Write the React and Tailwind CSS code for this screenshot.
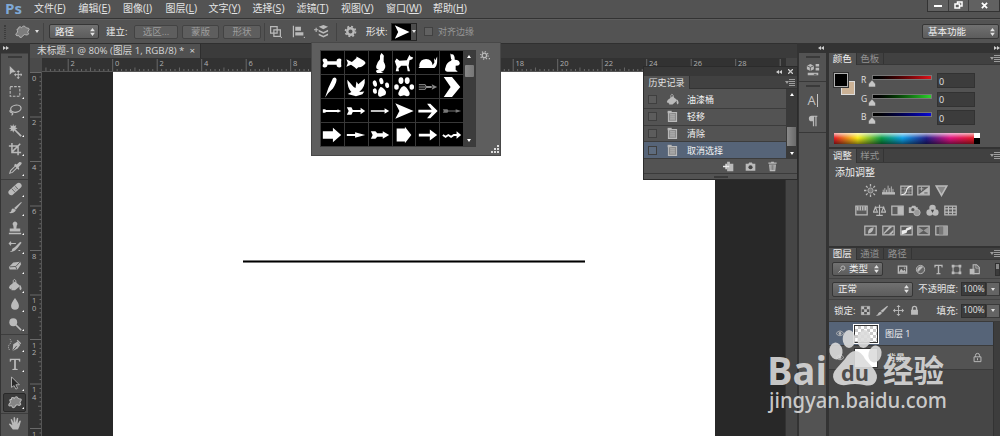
import clsx from 'clsx'

const menus = [
  { name: '文件', hotkey: 'F', width: 'w-[44.5px]' },
  { name: '编辑', hotkey: 'E', width: 'w-[44.5px]' },
  { name: '图像', hotkey: 'I', width: 'w-[42.5px]' },
  { name: '图层', hotkey: 'L', width: 'w-[43px]' },
  { name: '文字', hotkey: 'Y', width: 'w-[44px]' },
  { name: '选择', hotkey: 'S', width: 'w-[44px]' },
  { name: '滤镜', hotkey: 'T', width: 'w-[44.5px]' },
  { name: '视图', hotkey: 'V', width: 'w-[45px]' },
  { name: '窗口', hotkey: 'W', width: 'w-[47px]' },
  { name: '帮助', hotkey: 'H', width: 'w-[44px]' }
]

// All small icons share a 16x16 grid
function Icon({ children, className = 'w-4 h-4' }) {
  return (
    <svg viewBox="0 0 16 16" className={clsx('shrink-0 text-[#bababa]', className)} fill="currentColor">
      {children}
    </svg>
  )
}

const STAR = 'M4 3.500q1.500-1.500 3 .5Q9 1 10.500 2.500 12 5 14.500 4.500q1.500 1-.5 3-1 1 .5 3-1 2-3 1-1.500-1-3 1-2 3-3.500 1.500-.5-2.500-3-1.500-2-.5-.5-2.500 2-1.500 1-3-1.500-2 1.500-2z'
const FOLDER = 'M3 3h10v11H3z'
const LOCK = 'M4 7V5a4 4 0 0 1 8 0v2h1v7H3V7zM6 7h4V5a2 2 0 0 0-4 0z'

const bucket = (
  <>
    <path d="M3 8 8 4l6 5-6 5H4z" />
    <path d="M14 8q3 5 0 6-2-2 0-6M1 11q1-4 4-3l-2 5z" />
    <path d="M6 8V3q1-3 3 0v4" fill="none" stroke="currentColor" />
  </>
)

const tools = [
  { id: 'move', icon: <><path d="M2 1v10l2.500-2.500L9 8z" /><path d="M7.500 11H16M11.700 7v8.500" stroke="currentColor" strokeWidth="1.100" /><path d="m7 11 2-2v4zM16.500 11l-2-2v4zM11.700 6l2 2h-4zM11.700 16l2-2h-4z" /></>, single: true },
  { id: 'marquee', icon: <rect x="2.500" y="3" width="11" height="11" fill="none" stroke="currentColor" strokeWidth="1.200" strokeDasharray="3 1.500" /> },
  { id: 'lasso', icon: <g fill="none" stroke="currentColor" strokeWidth="1.400"><ellipse cx="9" cy="6.500" rx="6" ry="4" transform="rotate(-12 9 6.500)" /><path d="M3 8q-2 2 1 3t0 3" /></g> },
  { id: 'wand', icon: <><path d="m8 8 7 7" stroke="currentColor" strokeWidth="2" /><path d="m6 1 .8 2.500L9.500 2.500 8.500 5l2.500 1-2.500 1 1 2.500L7 8.500 6 11 5 8.500l-2.500 1 1-2.500L1 6l2.500-1-1-2.500 2.700 1z" /></> },
  { id: 'crop', icon: <path d="M4.500 1v11H15M1 4.500h10.500V15M5 11l9-9" fill="none" stroke="currentColor" strokeWidth="1.700" /> },
  { id: 'eyedropper', icon: <><path d="m2 14 1-3 6-6 2 2-6 6z" fill="none" stroke="currentColor" strokeWidth="1.200" /><path d="m8 3 2 1 3-3q4 0 2 3l-3 3 1 2-1 1-5-5z" /></>, divider: true },
  { id: 'heal', icon: <g transform="rotate(-42 8 8)"><rect x="-1" y="4.800" width="18" height="6.400" rx="3.200" /><path d="M5.500 5v6M10.500 5v6" stroke="#555" strokeWidth=".8" /><path d="M7 7h.8M8.500 7h.8M7 9h.8M8.500 9h.8" stroke="#555" strokeWidth=".8" /></g> },
  { id: 'brush', icon: <><path d="m7 8 8-7 .8.800L9 10z" /><path d="M7 9q3 1 1 3-3 3-7.500 1.500Q4 13 4 10q1-2 3-1" /></> },
  { id: 'stamp', icon: <path d="M6.500 8.500 6 5a2.600 2.600 0 1 1 4 0l-.5 3.500H14V12H2V8.500zM1 13.500h14V15H1z" /> },
  { id: 'history', icon: <><path d="m8 8 6-6 1.500 1L11 9l-3 3q-3 2-6 1.500Q5 13 5 10z" /><path d="M2 4h7M3.500 2 1.500 4l2 2M12 12h2" stroke="currentColor" strokeWidth="1.300" fill="none" /></> },
  { id: 'eraser', icon: <><path d="m6 4 8-1 1 3-4 6H2l-1-3z" /><path d="m2 9 7-.5L14 3M9 9l1 3" stroke="#555" fill="none" /></> },
  { id: 'bucket', icon: bucket },
  { id: 'blur', icon: <path d="M8 1q4.500 6 4.500 9a4.500 4.500 0 0 1-9 0Q3.500 7 8 1" /> },
  { id: 'dodge', icon: <><circle cx="6" cy="6" r="4.500" /><path d="m9 9 6 6" stroke="currentColor" strokeWidth="1.700" /></>, divider: true },
  { id: 'pen', icon: <><path d="m5 15 1-8 5-3 3 4-3 4z" /><path d="m11 2 4 4-1 1-4-4z" /><path d="m5 15 5-6" stroke="#444" /><path d="M2 1q3 3 0 6t0 7" stroke="currentColor" fill="none" strokeDasharray="1.500 1" /></> },
  { id: 'type', icon: <path d="M2 2h12v3.500h-1L12 3.500H9v9.800l2 .5v1H5v-1l2-.5V3.500H4l-1 2H2z" /> },
  { id: 'select', icon: <path d="M4 1v12l3-2 2 4 2-1-2-4h4z" fill="#292929" stroke="currentColor" /> },
  { id: 'shape', icon: <path d={STAR} fill="#858585" stroke="currentColor" strokeWidth="1.200" />, active: true, divider: true },
  { id: 'hand', icon: <path d="M5.500 15.500 1 9.500q.5-1.500 2-.5L5 10.500 3 4q.8-1.200 1.700 0L6.500 8 6.300 2q1-1.500 1.800 0l.6 5.500L10 2.500q1-1.200 1.700.2L11 9l2.200-3.500q1.300-.7 1.500.5L13 12l-1.500 3.500z" />, single: true }
]

// Custom shape presets, drawn on a 24x24 grid
const shapes = [
  <path d="M2 10q-1-3 2-3t3 3h10q0-3 3-3t2 3v4q1 3-2 3t-3-3H7q0 3-3 3t-2-3l1-2z" />,
  <path d="m1.500 8 6 3 5-4.500 0-1.500 4 2q4.500 2 6 5-3 5-8 4.500l-2 2-2-2-4-2.500-5 2 1.500-4z" />,
  <path d="M12 4l1.500-3 1.500 1.500q2 1 1 4v4q3 5 1 8-1 3-4 3l3 1.500H9q-2-1-1-3l3-1q-4 0-3-4 1-4 4-7z" />,
  <path d="m2 10 2-3 3 2.500 8-.5 3-6 1 2 3 1-1 2-3 1-1 6 1.500 6H16l-1-6H9l-3 3 .5 3H3l1-5z" />,
  <path d="M1.500 17.500q2-1 1-3 1-7 7.500-7 6.500.5 7 7l2-3-.5-5 1.500 2.500L22 5v5q0 5-3 7.500z" />,
  <path d="M12 2.500q3 0 3 6 5.500 0 5.500 4.500-1 2-4.500 2v4.500q2.500 1 2 2H7q-4-1-2-5 1-5 6-7 .5-1 1-3l-1.500-4M10 1l3 6-2 1z" />,
  <path d="M13 2.500q3-2 4 1 0 4-4 10l-5 5-3.500 5L8 13z" />,
  <path d="m2.500 4 7 8 2 1 1-7 2 3 7-6q1 9-6 14.500l5.500-.5-2 3-7 2-9-2.500 4-2q-4.500-5-4.500-13.500" />,
  <g transform="rotate(-14 12 12)"><ellipse cx="5.500" cy="15" rx="2.200" ry="3" /><ellipse cx="7.500" cy="7" rx="2.200" ry="3.500" /><ellipse cx="15" cy="6" rx="2.200" ry="3.500" /><ellipse cx="20" cy="12" rx="2.200" ry="3" /><path d="M12.500 12q3 1 4.500 6 0 5-5 4-5 1.500-4-3 1-5 4.500-7" /></g>,
  <><ellipse cx="3.800" cy="12" rx="2.500" ry="3" /><ellipse cx="8.700" cy="5" rx="2.700" ry="3.700" /><ellipse cx="15.500" cy="5" rx="2.700" ry="3.700" /><ellipse cx="20.500" cy="12" rx="2.500" ry="3" /><path d="M12 11q3 1 6 7 1 4-3 4l-3-1-4 1q-3-1-2-4 3-7 6-7" /></>,
  <><path d="M2 9.500h7l1 2h6M2 14.500h7l1-2h6M2 12h8" fill="none" stroke="#bbb" strokeWidth=".9" /><path d="m16 9 6 3-6 3 1-3z" fill="#888" /></>,
  <path d="M3 1h9l9 11-9 11H3l7.500-11z" />,
  <path d="M2 10h3v1h13v-1l4 2-4 2v-1H5v1H2z" />,
  <path d="M2 8h5l1.500 3H17V8.500l5 3.500-5 3.500V13H8.500L7 16H2l2-4z" />,
  <path d="M2 11.300h15V9l5 3-5 3v-2.300H2z" />,
  <path d="m2.500 3.500 20 8.500-20 8.500 4.500-8.500z" />,
  <path d="M1.500 10.500H16l-5-6.500h3.500l8 8-8 8H11l5-6.500H1.500z" />,
  <path d="M2 10h5l1 1.500h8V10l6 2-6 2v-1.500H8L7 14H2l1-2z" fill="#777" />,
  <path d="M2 8h11V4l9 8-9 8v-4H2z" />,
  <path d="M2 11h9V9l11 3-11 3v-2H2z" />,
  <path d="M2 8h5l2 2h6V8l7 4-7 4v-2H9l-2 2H2l2-4z" />,
  <path d="M4 5h9V3l7 9-7 9v-2H4z" />,
  <path d="M2 10.500h12V6l8 6-8 6v-4.500H2z" />,
  <><path d="m2 12 3 2 3-2 3 2 3-2h4" fill="none" stroke="#fff" strokeWidth="2" /><path d="m17 8 5 4-5 4z" /></>
]

const historyRows = [
  { label: '油漆桶', bucket: true },
  { label: '轻移' },
  { label: '清除' },
  { label: '取消选择', active: true }
]

const channels = [
  { name: 'R', bar: 'from-black to-[#e0121a]' },
  { name: 'G', bar: 'from-black to-[#2bd42b]' },
  { name: 'B', bar: 'from-black to-[#0909d8]' }
]

const frame = <path d="M1 2.500h14v11H1z" fill="#5b5b5b" stroke="currentColor" strokeWidth="1.500" />

const adjustments = [
  [
    <><circle cx="8" cy="8" r="3.200" fill="#777" stroke="currentColor" /><path d="M8 0v3M8 13v3M0 8h3M13 8h3M2.500 2.500l2 2M11.500 11.500l2 2M2.500 13.500l2-2M11.500 4.500l2-2" stroke="currentColor" strokeWidth="1.600" /></>,
    <><path d="M0 10h16v3H0z" /><path d="M1.500 7v4M3.500 5v6M5.500 7v4M7.500 2v9M9.500 5v6M11.500 3v8M13.500 6v5" stroke="currentColor" strokeWidth="1.100" /></>,
    <>{frame}<path d="M1 6h14M1 10h14M6 3v10M11 3v10" stroke="currentColor" strokeWidth=".6" /><path d="M2 13q5 0 6-5t6-5" fill="none" stroke="#eee" strokeWidth="1.500" /></>,
    <>{frame}<path d="M15 3v10H2z" /><path d="M3 6h5M5.500 3.500v5" stroke="currentColor" /><path d="M9 11h4" stroke="#444" /></>,
    <path d="M1.500 2.500h13L8 14z" fill="#888" stroke="currentColor" strokeWidth="2" />
  ],
  [
    <>{frame}<path d="M2 3h12v5H2z" /><path d="M5 3v5M8 3v5M11 3v5" stroke="#555" /></>,
    <path d="M8 1v13M4 14h8M2 4h12M3 4l-2.500 6h5zM13 4l-2.500 6h5z" fill="none" stroke="currentColor" strokeWidth="1.400" />,
    <>{frame}<path d="M8 3h7v10H8z" /></>,
    <><path d="M1 4h3l1-2h4l1 2h2v7H1z" /><circle cx="11" cy="10.500" r="4" fill="#999" stroke="currentColor" /><circle cx="6" cy="7" r="2" fill="#555" /></>,
    <><circle cx="8" cy="5" r="4" /><circle cx="4.500" cy="10.500" r="4" /><circle cx="11.500" cy="10.500" r="4" /><path d="M6 7h4l-2 4z" fill="#444" /></>,
    <>{frame}<path d="M1 6h14M1 10h14M5.500 3v10M10.500 3v10" stroke="currentColor" strokeWidth="1.300" /></>
  ],
  [
    <>{frame}<path d="M5 12q-1-7 7-8-1 7-7 8" /></>,
    <>{frame}<path d="M2 11 9 3h4L2 13zM8 13l6-6v3l-3 3z" /></>,
    <>{frame}<path d="M2 8l5-1 1-2 6-2v3L9 8l-1 3-6 2z" fill="#eee" /></>,
    <>{frame}<path d="M1 3l7 5 7-5v10L8 8l-7 5z" fill="#999" /></>,
    <>{frame}<path d="M5 3h5v10H5z" fill="#777" /><path d="M10 3h5v10h-5z" fill="#a0a0a0" /></>
  ]
]

function Caret() {
  return <span className="shrink-0 border-x-[2.5px] border-t-[3px] border-x-transparent border-t-[#e0e0e0]"></span>
}

function UpDown() {
  return (
    <svg viewBox="0 0 6 10" className="ml-auto w-[5px] h-[8px] shrink-0" fill="#e2e2e2">
      <path d="m3 0 3 4H0zM3 10l3-4H0z" />
    </svg>
  )
}

function Select({ children, className }) {
  return (
    <div className={clsx('flex items-center shrink-0 rounded-[2px] border border-[#363636] bg-linear-to-b from-[#717171] to-[#5c5c5c] pl-[5px] pr-[3px] text-[#f0f0f0]', className)}>
      {children}
      <UpDown />
    </div>
  )
}

function DisabledButton({ children, className }) {
  return (
    <div className={clsx('flex items-center justify-center shrink-0 h-[14px] rounded-[2px] border border-[#434343] bg-[#5e5e5e] text-[#9c9c9c]', className)}>
      {children}
    </div>
  )
}

function PanelMenu() {
  return (
    <svg viewBox="0 0 10 7" className="ml-auto w-[10px] h-[7px] shrink-0 self-center" fill="#9d9d9d">
      <path d="M0 2h4L2 5zM4 0h6v1H4zM4 2h6v1H4zM4 4h6v1H4zM4 6h6v1H4z" />
    </svg>
  )
}

function Tabs({ items, className }) {
  return (
    <div className={clsx('flex shrink-0 bg-[#414141] border-b border-[#383838]', className)}>
      {items.map((item, i) => (
        <div
          key={item}
          className={clsx(
            'flex items-center justify-center w-[27.500px] border-r border-[#343434]',
            i === 0 ? 'bg-[#535353] text-[#f0f0f0] -mb-px' : 'text-[#929292]'
          )}
        >
          {item}
        </div>
      ))}
      <PanelMenu />
    </div>
  )
}

function Chevrons({ right }) {
  return (
    <svg viewBox="0 0 6 4" className={clsx('w-[6px] h-[4px] shrink-0', right && 'rotate-180')} fill="#cfcfcf">
      <path d="M3 0v4L0 2zM6 0v4L3 2z" />
    </svg>
  )
}

function Grip() {
  return <div className="mx-auto h-[2px] w-[14px] shrink-0 bg-[#3a3a3a]"></div>
}

function MenuBar() {
  return (
    <div className="flex h-[19px] shrink-0 border-b border-[#333] bg-[#535353] text-[#e4e4e4]">
      <div className="w-[34px] pl-[5px] text-[15px] leading-[16px] font-bold text-[#7fa9d6]">Ps</div>
      {menus.map((menu) => (
        <div key={menu.name} className={clsx('shrink-0 text-[10px] leading-[16px] whitespace-nowrap', menu.width)}>
          {menu.name}
          <span className="text-[10.500px]">(<u>{menu.hotkey}</u>)</span>
        </div>
      ))}
      <div className="ml-auto flex h-[12px] w-[73px] border border-t-0 border-[#333] bg-[#616161]">
        <div className="flex w-[21px] items-center justify-center border-r border-[#3c3c3c]">
          <span className="h-[2px] w-[8px] bg-white"></span>
        </div>
        <div className="flex w-[20px] items-center justify-center border-r border-[#3c3c3c]">
          <svg viewBox="0 0 9 8" className="w-[9px] h-[8px] -mt-px" fill="none" stroke="#fff" strokeWidth="1.500">
            <path d="M3.500 2.500V1H8v4H6M1 3h4.500v4H1z" />
          </svg>
        </div>
        <div className="flex flex-1 items-center justify-center pb-px">
          <svg viewBox="0 0 8 8" className="w-[7px] h-[7px]" stroke="#fff" strokeWidth="2">
            <path d="m1 1 6 6M7 1 1 7" />
          </svg>
        </div>
      </div>
    </div>
  )
}

function OptionsBar() {
  return (
    <div className="flex h-[24px] shrink-0 items-center bg-[#535353] border-t border-t-[#5e5e5e] text-[9.500px] text-[#e8e8e8]">
      <div className="ml-[4px] h-[14px] w-[2px] border-x border-dotted border-[#3c3c3c]"></div>
      <Icon className="ml-[9px] w-[15px] h-[15px]"><path d={STAR} fill="#7d7d7d" stroke="currentColor" /></Icon>
      <div className="ml-[5px] mr-[4px] flex"><Caret /></div>
      <div className="h-[18px] w-px bg-[#434343]"></div>
      <Select className="ml-[5px] h-[15px] w-[50px]">路径</Select>
      <div className="w-[35px] shrink-0 pl-[7px] whitespace-nowrap">建立:</div>
      <DisabledButton className="w-[44px]">选区...</DisabledButton>
      <DisabledButton className="ml-[4px] w-[37px]">蒙版</DisabledButton>
      <DisabledButton className="ml-[4px] w-[38px]">形状</DisabledButton>
      <div className="ml-[3px] h-[18px] w-px bg-[#434343]"></div>
      <Icon className="ml-[4px] w-[13px] h-[13px]">
        <path d="M2 2h8v8H2zM6 6h8v8H6z" fill="none" stroke="currentColor" strokeWidth="1.500" />
        <path d="M14 16h2v-2z" />
      </Icon>
      <Icon className="ml-[10px] w-[13px] h-[13px]">
        <path d="M1 1h1.500v14H1zM4 2h7v5H4zM4 9h10v4H4zM14 16h2v-2z" />
      </Icon>
      <Icon className="ml-[9px] w-[15px] h-[15px]">
        <path d="m10 1 5 2-5 2.500L5 3zM5 6l5 2.500L15 6v2l-5 2.500L5 8zM5 10l5 2.500 5-2.500v2l-5 2.500L5 12zM0 5.500h4.500v1.200H0z" />
        <path d="M1.700 4h1.200v4.500H1.700z" />
      </Icon>
      <div className="ml-[7px] h-[18px] w-px bg-[#434343]"></div>
      <Icon className="ml-[7px] w-[13px] h-[13px]">
        <circle cx="8" cy="8" r="4" fill="none" stroke="currentColor" strokeWidth="3" />
        <circle cx="8" cy="8" r="6.200" fill="none" stroke="currentColor" strokeWidth="2" strokeDasharray="2.400 2.470" />
      </Icon>
      <div className="ml-[9px] w-[25px] shrink-0 whitespace-nowrap">形状:</div>
      <div className="flex h-[18px] w-[26px] shrink-0 border border-[#262626] bg-black">
        <svg viewBox="0 0 24 24" className="w-[19px] h-[16px]" fill="#fff"><path d="m2 2 22 10L2 22l5-10z" /></svg>
        <div className="flex flex-1 items-center justify-center bg-[#4d4d4d]"><Caret /></div>
      </div>
      <div className="ml-[7px] h-[9px] w-[9px] shrink-0 border border-[#414141] bg-[#616161]"></div>
      <div className="ml-[5px] whitespace-nowrap text-[9px] text-[#969696]">对齐边缘</div>
      <Select className="ml-auto mr-px h-[15px] w-[77px]">基本功能</Select>
    </div>
  )
}

function Toolbar() {
  return (
    <div className="flex w-[30px] shrink-0 flex-col bg-[#343434] pr-[2px] pl-px">
      <div className="flex h-[10px] shrink-0 items-center pl-[2px]"><Chevrons right /></div>
      <div className="flex flex-1 flex-col overflow-hidden border-t border-[#444] bg-[#535353] pt-[2px]">
        <Grip />
        <div className="flex flex-col pt-[4.500px]">
          {tools.map((tool) => (
            <div key={tool.id} className={clsx('shrink-0', tool.divider && 'border-b border-[#3d3d3d] pb-px')}>
              <div
                className={clsx(
                  'flex h-[19.200px] items-center justify-center',
                  tool.active && 'mx-[2px] rounded-[2px] border border-[#292929] bg-[#3b3b3b]'
                )}
              >
                <Icon className="w-[14px] h-[14px]">{tool.icon}</Icon>
                {!tool.single && (
                  <span className="-mr-[2px] mb-[2px] self-end border-l-[1px] border-t-[1px] border-l-transparent border-t-transparent border-r border-b border-r-white border-b-white"></span>
                )}
              </div>
            </div>
          ))}
        </div>
      </div>
    </div>
  )
}

const UNIT = 22.25

function TopRuler() {
  const ticks = Array.from({ length: 167 }, (_, i) => i - 15)
  return (
    <svg width="744" height="14" viewBox="42 58 744 14" className="shrink-0 bg-[#323232]">
      {ticks.map((t) => {
        const x = 112.7 + (t * UNIT) / 5
        return <path key={t} d={`M${x} 71v${t % 10 === 0 ? -12 : t % 5 === 0 ? -3.5 : -2}`} stroke="#777" strokeWidth=".8" />
      })}
      {ticks.filter((t) => t % 10 === 0 && t < 150).map((t) => (
        <text key={t} x={115 + (t * UNIT) / 5} y="66" fontSize="7.5" fill="#b0b0b0">{Math.abs(t / 5)}</text>
      ))}
      <path d="M42 71.500h744" stroke="#555" />
    </svg>
  )
}

function SideRuler() {
  const ticks = Array.from({ length: 84 }, (_, i) => i)
  return (
    <svg width="12" height="364" viewBox="30 72 12 364" className="shrink-0 bg-[#323232]">
      {ticks.map((t) => {
        const y = 72.5 + (t * UNIT) / 5
        return <path key={t} d={`M42 ${y}h${t % 10 === 0 ? -12 : t % 5 === 0 ? -4 : -2.5}`} stroke="#777" strokeWidth=".8" />
      })}
      {ticks.filter((t) => t % 10 === 0).map((t) =>
        String(t / 5).split('').map((digit, i) => {
          const y = 80.5 + (t * UNIT) / 5 + i * 7.5
          return y < 438 && (
            <text key={t + '-' + i} x="32" y={y} fontSize="7.5" fill="#b0b0b0">{digit}</text>
          )
        })
      )}
      <path d="M41.500 72v364" stroke="#555" />
    </svg>
  )
}

function Document() {
  return (
    <div className="flex w-[767px] shrink-0 flex-col bg-[#3b3b3b]">
      <div className="flex h-[15px] shrink-0 border-t border-[#303030]">
        <div className="flex w-[171px] items-center justify-between border-r border-[#2e2e2e] bg-[#505050] pr-[5px] pl-[7px] text-[9.700px] whitespace-nowrap text-[#d6d6d6]">
          <span>未标题-1 @ 80% (图层 1, RGB/8) *</span>
          <span>×</span>
        </div>
      </div>
      <div className="flex h-[14px] shrink-0">
        <div className="w-[12px] bg-[#4a4a4a]"></div>
        <TopRuler />
        <div className="flex-1 bg-[#454545]"></div>
      </div>
      <div className="flex flex-1">
        <SideRuler />
        <div className="flex flex-1 bg-[#282828] pl-[71px]">
          <div className="w-[602px] bg-white pt-[188px] pl-[130px]">
            <div className="h-[3px] w-[342px] border-y border-[#777] bg-black"></div>
          </div>
        </div>
        <div className="w-[12px] border-l border-[#333] bg-[#454545]"></div>
      </div>
    </div>
  )
}

function IconDock() {
  return (
    <div className="flex w-[31px] shrink-0 flex-col bg-[#333] pr-[2px] pl-[2px]">
      <div className="flex h-[10px] shrink-0 items-center justify-end pr-[2px]"><Chevrons /></div>
      <div className="flex flex-1 flex-col bg-[#535353]">
        <div className="flex h-[29px] flex-col border-b border-[#383838] pt-[3px]">
          <Grip />
          <Icon className="mx-auto mt-[5px] w-[14px] h-[14px]">
            <path d="m5 1 4 2v4L5 9 1 7V3zM11 1h4v3h-4zM11 5.500h4v3h-4zM2 11h12v3H2z" />
            <path d="m1 3 4 2 4-2M5 5v4M9 13h3" stroke="#555" fill="none" />
          </Icon>
        </div>
        <div className="flex h-[51px] flex-col items-center border-b border-[#383838] pt-[3px]">
          <Grip />
          <div className="mt-[6px] flex h-[14px] items-center text-[13px] text-[#c4c4c4]">
            A<span className="ml-px h-[13px] w-px bg-[#c4c4c4]"></span>
          </div>
          <Icon className="mt-[7px] w-[13px] h-[13px]">
            <path d="M7 2h7v1.500h-1V15h-1.500V3.500H10V15H8.500V9H7a3.500 3.500 0 0 1 0-7" />
          </Icon>
        </div>
      </div>
    </div>
  )
}

function ColorPanel() {
  return (
    <>
      <Tabs items={['颜色', '色板']} className="h-[12px]" />
      <div className="h-[84px] shrink-0 border-b-2 border-[#333] bg-[#535353] pt-[8px] pl-[5px]">
        <div className="flex h-[60px]">
          <div className="relative w-[27px]">
            <div className="absolute top-[8px] left-[7px] h-[14px] w-[14px] border border-[#ddd] bg-[#cbb296]"></div>
            <div className="relative h-[14px] w-[14px] border border-[#b0b0b0] bg-black outline outline-[#333]"></div>
          </div>
          <div className="flex flex-col">
            {channels.map((channel) => (
              <div key={channel.name} className="flex h-[18.500px]">
                <div className="w-[11px] pt-px text-[8.500px] leading-[12px] text-[#e0e0e0]">{channel.name}</div>
                <div className="w-[65px] pt-[2px]">
                  <div className={clsx('h-[5px] w-[60px] border border-[#777] bg-linear-to-r', channel.bar)}></div>
                  <svg viewBox="0 0 8 7" className="-ml-[4px] w-[8px] h-[7px]" fill="#c6c6c6" stroke="#555" strokeWidth=".6"><path d="m4 0 3.500 4v3h-7V4z" /></svg>
                </div>
                <div className="flex h-[15px] w-[38px] items-center border border-[#323232] bg-[#3c3c3c] pt-px pl-px text-[9px] text-[#e4e4e4]">0</div>
              </div>
            ))}
          </div>
        </div>
        <div className="flex h-[11px] w-[146px]">
          <div className="flex-1 bg-[linear-gradient(to_right,#e51b24,#f9ea16_17%,#0a9b48_34%,#0e9fe6_49%,#23208c_66%,#df1380_83%,#e51b24)]">
            <div className="h-full bg-linear-to-b from-white/70 via-transparent via-45% to-black/50"></div>
          </div>
          <div className="w-[6px] bg-linear-to-b from-white from-50% to-black to-50%"></div>
        </div>
      </div>
    </>
  )
}

function AdjustPanel() {
  return (
    <>
      <Tabs items={['调整', '样式']} className="h-[14px]" />
      <div className="flex h-[85px] shrink-0 flex-col border-b-2 border-[#333] bg-[#535353] pt-[2px]">
        <div className="h-[15px] pl-[6px] text-[10px] leading-[14px] text-[#ececec]">添加调整</div>
        {adjustments.map((row, i) => (
          <div key={i} className="flex h-[20px] w-[154px] items-center justify-center gap-[4.700px] self-start">
            {row.map((icon, j) => (
              <Icon key={j} className="w-[13px] h-[13px]">{icon}</Icon>
            ))}
          </div>
        ))}
      </div>
    </>
  )
}

function Percent() {
  return (
    <div className="flex h-[14px] w-[39px] shrink-0">
      <div className="flex w-[25px] items-center border border-[#303030] bg-[#3c3c3c] pl-px text-[8.500px] text-[#e4e4e4]">100%</div>
      <div className="flex flex-1 items-center justify-center border border-[#393939] bg-[#646464]"><Caret /></div>
    </div>
  )
}

function Eye() {
  return (
    <Icon className="w-[10px] h-[9px]">
      <path d="M1 8q7-9 14 0-7 8-14 0z" fill="none" stroke="currentColor" strokeWidth="1.500" />
      <circle cx="8" cy="8" r="2.500" />
    </Icon>
  )
}

function LayersPanel() {
  return (
    <>
      <Tabs items={['图层', '通道', '路径']} className="h-[12px]" />
      <div className="flex h-[19px] shrink-0 items-center border-b border-[#434343] bg-[#535353] pl-[3px]">
        <Select className="h-[14px] w-[51px]">
          <Icon className="mr-[3px] w-[8px] h-[8px]"><path d="m1 15 6-6M6 5a4 4 0 1 1 4 5q-3 0-4-2z" fill="none" stroke="currentColor" strokeWidth="2" /></Icon>
          类型
        </Select>
        <div className="ml-[14px] flex items-center gap-[7px]">
          <Icon className="w-[11px] h-[11px]"><path d="M1 2h14v12H1zM3 4v8h10V4z" fillRule="evenodd" /><path d="m3 12 3-5 3 3 2-2 2 4zM10 5h2v2h-2z" /></Icon>
          <Icon className="w-[11px] h-[11px]"><circle cx="8" cy="8" r="6" fill="#666" stroke="currentColor" strokeWidth="1.300" /><path d="M4 12A6 6 0 0 1 12 4z" /></Icon>
          <Icon className="w-[11px] h-[11px]"><path d="M2 1h12v4h-1.500L12 3H9v10l2 .5V15H5v-1.500l2-.5V3H4l-.5 2H2z" /></Icon>
          <Icon className="w-[11px] h-[11px]"><path d="M3 3h10v10H3z" fill="none" stroke="currentColor" strokeWidth="1.500" /><path d="M1 1h4v4H1zM11 1h4v4h-4zM1 11h4v4H1zM11 11h4v4h-4z" /></Icon>
          <Icon className="w-[11px] h-[11px]"><path d="M6 1h5l4 4v9H6z" fill="#666" stroke="currentColor" strokeWidth="1.500" /><path d="M10 1v5h5" fill="none" stroke="currentColor" /><path d="M1 7h7v8H1z" /></Icon>
        </div>
        <div className="ml-auto h-[13px] w-[5px] border border-[#303030] bg-linear-to-b from-[#888] from-50% to-[#3b3b3b] to-50%"></div>
      </div>
      <div className="flex h-[21px] shrink-0 items-center border-b border-[#434343] bg-[#535353] pl-[3px]">
        <Select className="h-[15px] w-[81px]">正常</Select>
        <div className="ml-auto mr-[3px] whitespace-nowrap text-[9.300px] text-[#e6e6e6]">不透明度:</div>
        <Percent />
      </div>
      <div className="flex h-[22px] shrink-0 items-center border-b border-[#3a3a3a] bg-[#535353] pl-[5px] text-[#e6e6e6]">
        <div className="w-[26px] whitespace-nowrap">锁定:</div>
        <div className="flex items-center gap-[5px]">
          <Icon className="w-[11px] h-[11px]"><path d="M2 2h12v12H2z" fill="none" stroke="currentColor" /><path d="M2 2h4v4H2zM10 2h4v4h-4zM6 6h4v4H6zM2 10h4v4H2zM10 10h4v4h-4z" /></Icon>
          <Icon className="w-[12px] h-[12px]"><path d="m6 8 9-7 1 1-7 8zM6 9q3 1 1 3-3 3-7 2 3-1 3-3 1-2 3-2" /></Icon>
          <Icon className="w-[11px] h-[11px]"><path d="M1 8h14M8 1v14" stroke="currentColor" strokeWidth="1.300" /><path d="m0 8 3-3v6zM16 8l-3-3v6zM8 0l3 3H5zM8 16l3-3H5z" /></Icon>
          <Icon className="w-[11px] h-[11px]"><path d={LOCK} fillRule="evenodd" /></Icon>
        </div>
        <div className="ml-auto mr-[3px] whitespace-nowrap">填充:</div>
        <Percent />
      </div>
      <div className="flex flex-1 bg-[#464646]">
        <div className="flex flex-1 flex-col text-[9px] text-[#efefef]">
          <div className="flex h-[24px] items-center border-b border-[#3b3b3b] bg-[#566478] pl-[6px]">
            <Eye />
            <div className="ml-[8px] flex h-[20px] w-[26px] items-center justify-center border border-white bg-[#333]">
              <div className="h-[16px] w-[22px] bg-[repeating-conic-gradient(#c9c9c9_0_25%,#fff_0_50%)] bg-size-[6px_6px]"></div>
            </div>
            <span className="ml-[6px]">图层 1</span>
          </div>
          <div className="flex h-[24px] items-center border-b border-[#3b3b3b] bg-[#535353] pl-[6px]">
            <Eye />
            <div className="ml-[9px] h-[20px] w-[24px] border border-[#333] bg-white"></div>
            <span className="ml-[9px]">背景</span>
            <Icon className="mr-[10px] ml-auto w-[11px] h-[11px]">
              <path d="M3 7h10v7H3zM5 7V5a3 3 0 0 1 6 0v2M8 9v3" fill="none" stroke="currentColor" strokeWidth="1.400" />
            </Icon>
          </div>
        </div>
        <div className="w-[7px] border-l border-[#333] bg-[#3d3d3d]"></div>
      </div>
    </>
  )
}

function ShapePicker() {
  return (
    <div className="absolute top-[42px] left-[311px] flex h-[114px] w-[190px] border border-[#484848] bg-[#5e5e5e] pt-[7px] pl-[8px]">
      <div className="flex h-[97px] border border-[#3b3b3b] bg-black">
        <div className="grid w-[142px] grid-cols-6 grid-rows-4 gap-px bg-[#383838]">
          {shapes.map((shape, i) => (
            <div key={i} className="flex items-center justify-center bg-black">
              <svg viewBox="0 0 24 24" className="w-[22px] h-[22px]" fill="#fff">{shape}</svg>
            </div>
          ))}
        </div>
        <div className="flex w-[12px] flex-col items-center bg-[#3c3c3c] py-[4px]">
          <span className="border-x-[2px] border-b-[3px] border-x-transparent border-b-white"></span>
          <div className="mt-[7px] mb-auto h-[12px] w-[9px] rounded-[1px] bg-linear-to-r from-[#888] to-[#777]"></div>
          <span className="border-x-[2px] border-t-[3px] border-x-transparent border-t-white"></span>
        </div>
      </div>
      <div className="flex flex-1 flex-col items-end justify-between pt-px pb-px">
        <Icon className="mr-[9px] w-[12px] h-[10px]">
          <circle cx="7" cy="7" r="3.500" fill="none" stroke="currentColor" strokeWidth="2" />
          <circle cx="7" cy="7" r="6" fill="none" stroke="currentColor" strokeWidth="2" strokeDasharray="2 2.700" />
          <path d="M14 11h2v2h-2z" />
        </Icon>
        <svg viewBox="0 0 9 9" className="w-[9px] h-[9px]" fill="#ddd">
          <path d="M6 0h2v2H6zM3 3h2v2H3zM6 3h2v2H6zM0 6h2v2H0zM3 6h2v2H3zM6 6h2v2H6z" />
        </svg>
      </div>
    </div>
  )
}

function HistoryPanel() {
  return (
    <div className="absolute top-[66px] left-[643px] flex h-[114px] w-[155px] flex-col border border-[#2b2b2b] bg-[#535353]">
      <div className="flex h-[9px] shrink-0 items-center justify-end gap-[6px] bg-[#383838] pr-[4px]">
        <Chevrons />
        <svg viewBox="0 0 6 6" className="w-[5px] h-[5px]" stroke="#ccc" strokeWidth="1.500"><path d="m0 0 6 6M6 0 0 6" /></svg>
      </div>
      <div className="flex h-[13px] shrink-0 border-b border-[#333] bg-[#414141] pr-[2px]">
        <div className="-mb-px flex w-[46px] items-center justify-center border-r border-[#333] bg-[#535353] text-[9px] text-[#e2e2e2]">历史记录</div>
        <PanelMenu />
      </div>
      <div className="flex h-[70px] shrink-0">
        <div className="flex flex-1 flex-col pt-[3px]">
          {historyRows.map((row) => (
            <div
              key={row.label}
              className={clsx('flex flex-1 items-center border-b border-[#3c3c3c] pl-[4px] text-[9px] text-[#f2f2f2]', row.active && 'bg-[#566478]')}
            >
              <div className="mr-[9px] h-[9px] w-[9px] border border-[#3f3f3f] bg-white/5"></div>
              <Icon className="w-[13px] h-[13px]">
                {row.bucket ? bucket : <><path d={FOLDER} fill="#8a8a8a" stroke="currentColor" strokeWidth="1.300" /><path d="M2 1h5v3H2z" /><path d="M5 6h6M5 8.500h6M5 11h6" stroke="#c8c8c8" /></>}
              </Icon>
              <span className="ml-[8px]">{row.label}</span>
            </div>
          ))}
        </div>
        <div className="flex w-[11px] flex-col items-center bg-[#3a3a3a] py-[4px]">
          <span className="border-x-[2px] border-b-[3px] border-x-transparent border-b-white"></span>
          <div className="mt-auto mb-[6px] h-[19px] w-[9px] bg-linear-to-r from-[#8a8a8a] to-[#6a6a6a]"></div>
          <span className="border-x-[2px] border-t-[3px] border-x-transparent border-t-white"></span>
        </div>
      </div>
      <div className="flex h-[15px] shrink-0 items-center gap-[11px] border-b border-[#3b3b3b] pt-px pl-[79px]">
        <Icon className="w-[11px] h-[11px]"><path d="M6 1h4v3h5v11H6z" /><path d="M0 8h9M4.500 4v8" stroke="#ececec" strokeWidth="2" /></Icon>
        <Icon className="w-[11px] h-[11px]"><path d="M1 4h4l1-2h4l1 2h4v10H1z" /><circle cx="8" cy="9" r="3" fill="#444" /></Icon>
        <Icon className="w-[11px] h-[11px]"><path d="M6 1h4v1h4v2H2V2h4zM3 5h10l-1 10H4z" /><path d="M6 6v7M8 6v7M10 6v7" stroke="#555" strokeWidth=".8" /></Icon>
      </div>
      <div className="flex flex-1 items-center"><Grip /></div>
    </div>
  )
}

function Watermark() {
  return (
    <div className="absolute top-[325px] left-[767px] flex h-[92px] w-[182px] flex-col text-[#dcdcdc]/90">
      <svg width="182" height="63" viewBox="0 0 182 63" fill="currentColor">
        <text x="0" y="60" fontSize="40" fontWeight="700" textLength="60" lengthAdjust="spacingAndGlyphs" fontFamily="Open Sans, sans-serif">Bai</text>
        <ellipse cx="69" cy="26" rx="6.500" ry="8.500" transform="rotate(-10 69 26)" />
        <ellipse cx="82" cy="14" rx="6.300" ry="9" />
        <ellipse cx="97" cy="14" rx="6.500" ry="9" transform="rotate(10 97 14)" />
        <ellipse cx="108" cy="29" rx="6.500" ry="8.500" transform="rotate(14 108 29)" />
        <path d="M88 26q6 0 10 8l8 9q6 7 3 13-3 6-12 4-9-2-18 0-9 1-12-5-3-6 3-12l8-9q5-8 10-8" />
        <text x="74" y="56" fontSize="22" fontWeight="700" fill="#4d4d4d" textLength="28" lengthAdjust="spacingAndGlyphs">du</text>
        <text x="116" y="57" fontSize="31" fontWeight="700" textLength="61" lengthAdjust="spacingAndGlyphs" fontFamily="Noto Sans CJK SC, sans-serif">经验</text>
      </svg>
      <svg width="182" height="29" viewBox="0 0 182 29" fill="currentColor">
        <text x="2" y="20" fontSize="21" textLength="178" lengthAdjust="spacingAndGlyphs" fontFamily="Noto Sans, sans-serif" fontWeight="500">jingyan.baidu.com</text>
      </svg>
    </div>
  )
}

export default function App() {
  return (
    <div className="relative isolate flex h-[436px] w-[1000px] flex-col overflow-hidden bg-[#535353] font-['Open_Sans','Noto_Sans_CJK_SC',sans-serif] text-[9.500px] leading-none">
      <MenuBar />
      <OptionsBar />
      <div className="flex min-h-0 flex-1">
        <Toolbar />
        <Document />
        <IconDock />
        <div className="flex min-w-0 flex-1 flex-col border-l border-[#333]">
          <div className="flex h-[10px] shrink-0 items-center justify-end bg-[#333]"><Chevrons right /></div>
          <ColorPanel />
          <AdjustPanel />
          <LayersPanel />
        </div>
      </div>
      <ShapePicker />
      <HistoryPanel />
      <Watermark />
    </div>
  )
}
